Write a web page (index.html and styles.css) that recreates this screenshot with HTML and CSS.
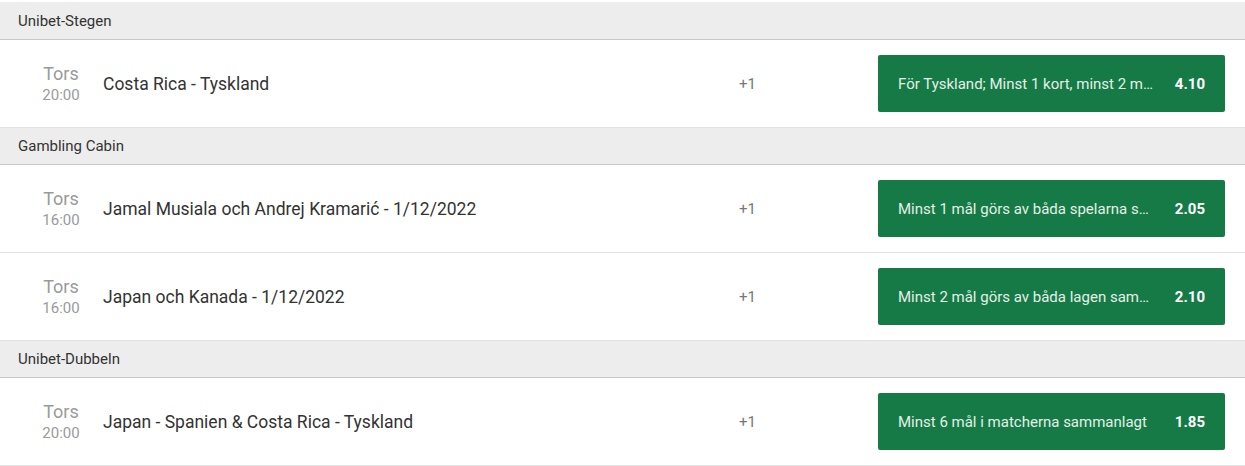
FILE: index.html
```html
<!DOCTYPE html>
<html lang="sv">
<head>
<meta charset="utf-8">
<title>Erbjudanden</title>
<link rel="stylesheet" href="styles.css">
</head>
<body>
<div class="list">
  <div class="group-head">Unibet-Stegen</div>
  <div class="event">
    <div class="when"><div class="day">Tors</div><div class="time">20:00</div></div>
    <div class="title">Costa Rica - Tyskland</div>
    <div class="more">+1</div>
    <button class="bet"><span class="label">För Tyskland; Minst 1 kort, minst 2 mål och minst 5 hörnor</span><span class="odds">4.10</span></button>
  </div>
  <div class="group-head">Gambling Cabin</div>
  <div class="event">
    <div class="when"><div class="day">Tors</div><div class="time">16:00</div></div>
    <div class="title">Jamal Musiala och Andrej Kramarić - 1/12/2022</div>
    <div class="more">+1</div>
    <button class="bet"><span class="label">Minst 1 mål görs av båda spelarna sammanlagt</span><span class="odds">2.05</span></button>
  </div>
  <div class="event">
    <div class="when"><div class="day">Tors</div><div class="time">16:00</div></div>
    <div class="title">Japan och Kanada - 1/12/2022</div>
    <div class="more">+1</div>
    <button class="bet"><span class="label">Minst 2 mål görs av båda lagen sammanlagt</span><span class="odds">2.10</span></button>
  </div>
  <div class="group-head">Unibet-Dubbeln</div>
  <div class="event">
    <div class="when"><div class="day">Tors</div><div class="time">20:00</div></div>
    <div class="title">Japan - Spanien &amp; Costa Rica - Tyskland</div>
    <div class="more">+1</div>
    <button class="bet"><span class="label">Minst 6 mål i matcherna sammanlagt</span><span class="odds">1.85</span></button>
  </div>
</div>
</body>
</html>
```

FILE: styles.css
```css
html, body {
  margin: 0;
  padding: 0;
  background: #ffffff;
}
body {
  font-family: Roboto, "Liberation Sans", Arial, sans-serif;
  color: #333333;
}
.list {
  padding-top: 2px;
}
.group-head {
  height: 37px;
  box-sizing: border-box;
  display: flex;
  align-items: center;
  padding-left: 18px;
  background: #ededed;
  border-top: 1px solid #d0d0d0;
  border-bottom: 1px solid #c8c8c8;
  font-size: 15px;
  color: #333333;
}
.list > .group-head:first-child {
  border-top: none;
  height: 38px;
}
.event {
  height: 88px;
  box-sizing: border-box;
  display: flex;
  align-items: center;
  padding: 0 20px 0 30px;
  border-bottom: 1px solid #e2e2e2;
}
.event + .group-head {
  border-top: none;
}
.when {
  width: 62px;
  text-align: center;
  color: #9a9a9a;
}
.day {
  font-size: 18px;
  line-height: 21px;
  margin-bottom: 2px;
}
.time {
  font-size: 15px;
  line-height: 19px;
}
.title {
  flex: 1;
  margin-left: 11px;
  font-size: 17.5px;
  color: #333333;
}
.more {
  width: 139px;
  font-size: 15px;
  color: #777777;
}
.bet {
  width: 347px;
  height: 57px;
  display: flex;
  align-items: center;
  padding: 0 20px;
  border: none;
  border-radius: 2px;
  background: #157a46;
  font-family: inherit;
  font-size: 15px;
  cursor: pointer;
  text-align: left;
}
.label {
  flex: 1;
  min-width: 0;
  overflow: hidden;
  white-space: nowrap;
  text-overflow: ellipsis;
  color: #e4efe8;
}
.odds {
  margin-left: 20px;
  font-weight: 700;
  color: #ffffff;
}
```
